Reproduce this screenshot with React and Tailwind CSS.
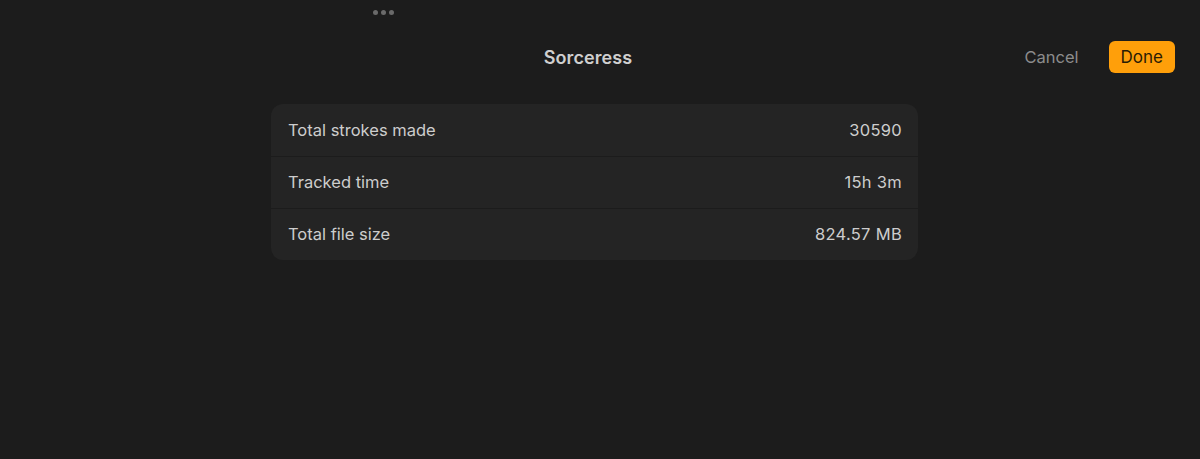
export default function App() {
  const rows = [
    ["Total strokes made", "30590"],
    ["Tracked time", "15h 3m"],
    ["Total file size", "824.57 MB"],
  ];
  return (
    <div
      className="w-[1200px] h-[459px] bg-[#1c1c1c] text-[#d2d2d2] flex flex-col"
      style={{ fontFamily: "Inter, 'Liberation Sans', sans-serif" }}
    >
      {/* grabber dots */}
      <div className="h-[24px] flex items-center gap-[3px] pl-[373px]">
        <span className="w-[5px] h-[5px] rounded-full bg-[#6a6a6a]" />
        <span className="w-[5px] h-[5px] rounded-full bg-[#6a6a6a]" />
        <span className="w-[5px] h-[5px] rounded-full bg-[#6a6a6a]" />
      </div>

      {/* header */}
      <div className="relative h-[66px] flex items-center justify-center pr-[24px]">
        <h1 className="text-[18px] font-semibold text-[#cfcfcf] tracking-[0.1px] mt-[1px]">Sorceress</h1>
        <div className="absolute right-[25px] top-[17px] flex items-center gap-[30px]">
          <span className="text-[16.5px] text-[#8c8c8c]">Cancel</span>
          <button className="h-[32px] px-[12px] rounded-[6px] bg-[#ff9f0a] text-[17px] text-[#2a1c05] leading-[33px]">
            Done
          </button>
        </div>
      </div>

      {/* stats card */}
      <div className="mt-[14px] ml-[271px] w-[647px] rounded-[12px] bg-[#242424] overflow-hidden">
        {rows.map(([label, value], i) => (
          <div
            key={label}
            className={`h-[52px] flex items-center justify-between pl-[17px] pr-[16px] text-[16.5px] text-[#cdcdcd] ${
              i > 0 ? "border-t border-[#1c1c1c]" : ""
            }`}
          >
            <span>{label}</span>
            <span className="tracking-[0.3px]">{value}</span>
          </div>
        ))}
      </div>
    </div>
  );
}
